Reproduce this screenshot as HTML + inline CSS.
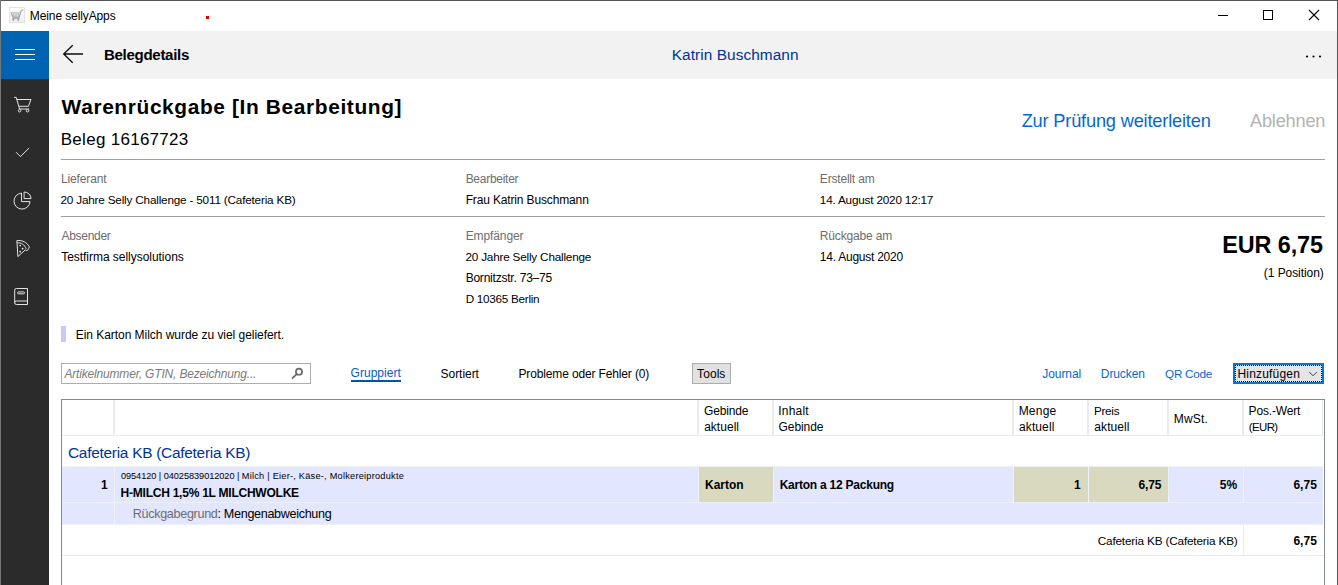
<!DOCTYPE html>
<html><head><meta charset="utf-8">
<style>
html,body{margin:0;padding:0;}
body{width:1338px;height:585px;overflow:hidden;background:#fff;font-family:"Liberation Sans",sans-serif;color:#000;position:relative;}
.t{position:absolute;white-space:nowrap;line-height:1;transform-origin:0 0;}
.b{position:absolute;}
svg{position:absolute;overflow:visible;}
</style></head><body>
<!-- window chrome -->
<div class="b" style="left:1px;top:1px;width:1336px;height:30px;background:#fff"></div>
<div class="b" style="left:1px;top:31px;width:1336px;height:48px;background:#f2f2f2"></div>
<div class="b" style="left:1px;top:31px;width:48px;height:48px;background:#0063b1"></div>
<div class="b" style="left:1px;top:79px;width:48px;height:506px;background:#2b2b2b"></div>
<!-- app icon -->
<div class="b" style="left:9px;top:7px;width:14px;height:14px;border:1px solid #e3e3e3;background:linear-gradient(#ffffff,#efefef)"></div>
<svg style="left:9px;top:7px" width="16" height="16" viewBox="0 0 16 16" fill="none" stroke="#979797" stroke-width="1"><path d="M2 5.2L3.9 10.3H10.3L12.3 3.3L14.3 2.9"/><path d="M2.4 5.3H11.4" stroke="#c4c4c4" stroke-width="0.8"/><path d="M4.1 5.6L4.8 10M6 5.6L6.3 10M7.9 5.6L7.8 10M9.8 5.6L9.3 10" stroke-width="0.9" stroke="#adadad"/><path d="M3.2 11.6H10.6" stroke="#a8a8a8" stroke-width="0.9"/><circle cx="4.3" cy="12.7" r="0.95" fill="#979797" stroke="none"/><circle cx="9.3" cy="12.7" r="0.95" fill="#979797" stroke="none"/></svg>
<div class="b" style="left:206px;top:16px;width:3px;height:3px;background:#d80000"></div>
<!-- window controls -->
<div class="b" style="left:1218px;top:15px;width:10px;height:1px;background:#000"></div>
<div class="b" style="left:1263px;top:10px;width:8px;height:8px;border:1px solid #000"></div>
<svg style="left:1309px;top:10px" width="10" height="10" viewBox="0 0 10 10" stroke="#000" stroke-width="1.1" fill="none"><path d="M0 0L10 10M10 0L0 10"/></svg>
<!-- hamburger -->
<div class="b" style="left:15px;top:49px;width:20px;height:1px;background:#fff"></div>
<div class="b" style="left:15px;top:54px;width:20px;height:1px;background:#fff"></div>
<div class="b" style="left:15px;top:59px;width:20px;height:1px;background:#fff"></div>
<!-- back arrow -->
<svg style="left:60px;top:40px" width="28" height="28" viewBox="0 0 28 28" fill="none" stroke="#0c0c0c" stroke-width="1.35"><path d="M23 14H3.8M12.7 5.2L3.7 14L12.7 22.8"/></svg>
<!-- ellipsis -->
<svg style="left:1300px;top:50px" width="26" height="12" viewBox="1300 50 26 12"><circle cx="1307" cy="56.5" r="1.1" fill="#000"/><circle cx="1313.5" cy="56.5" r="1.1" fill="#000"/><circle cx="1320" cy="56.5" r="1.1" fill="#000"/></svg>
<!-- sidebar icons -->
<svg style="left:0;top:79px" width="50" height="250" viewBox="0 79 50 250" fill="none" stroke="#e4e4e4" stroke-width="1">
<!-- cart -->
<path d="M14 97.4H16.2L19.6 109H29.2"/><path d="M16.8 99.5H31L28.4 106.3H18.8"/><circle cx="19.6" cy="110.7" r="1.3"/><circle cx="27.5" cy="110.7" r="1.3"/>
<!-- check -->
<path d="M16.1 152.2L20.4 156.6L29.1 148"/>
<!-- pie -->
<path d="M21.5 193.1A8 8 0 1 0 30 201.6H21.5Z"/><path d="M24.1 192V198.6H31A6.9 6.6 0 0 0 24.1 192Z"/>
<!-- pizza -->
<path d="M16.9 240.6L17.9 256.6L25.4 249.8C26.2 251.6 28.6 250.6 29.3 246.8C27 242.4 22 239.8 16.9 240.6Z"/><path d="M17.1 242.9C21.3 242.4 24.6 244.6 26.2 248.9"/><circle cx="20.2" cy="245.5" r="0.85" fill="#f0f0f0" stroke="none"/><circle cx="22.6" cy="248.6" r="0.9" fill="#f0f0f0" stroke="none"/><circle cx="20.2" cy="251.6" r="0.85" fill="#f0f0f0" stroke="none"/>
<!-- book -->
<path d="M27.5 288.5H16.4A1.7 1.7 0 0 0 14.7 290.2V302.8A1.7 1.7 0 0 0 16.4 304.5H27.5Z"/><path d="M27.5 301H16.4A1.7 1.7 0 0 0 14.7 302.7"/><rect x="17.6" y="291.9" width="6.9" height="1.9" rx="0.8"/>
</svg>
<!-- separators -->
<div class="b" style="left:61px;top:159px;width:1264px;height:1px;background:#a0a0a0"></div>
<div class="b" style="left:61px;top:216px;width:1264px;height:1px;background:#a0a0a0"></div>
<!-- note bar -->
<div class="b" style="left:61px;top:326px;width:5px;height:16px;background:#c9c9f8"></div>
<!-- search -->
<div class="b" style="left:61px;top:363px;width:248px;height:19px;border:1px solid #abadb3;background:#fff"></div>
<svg style="left:290px;top:367px" width="14" height="14" viewBox="0 0 14 14" fill="none" stroke="#686868" stroke-width="1.7"><circle cx="9" cy="4.7" r="3.05"/><path d="M6.7 7.1L2 11.7"/></svg>
<!-- tabs underline -->
<div class="b" style="left:351px;top:380px;width:50px;height:2px;background:#0055aa"></div>
<!-- Tools button -->
<div class="b" style="left:692px;top:363px;width:37px;height:19px;border:1px solid #adadad;background:#e1e1e1"></div>
<!-- Hinzufuegen button -->
<div class="b" style="left:1233px;top:363px;width:87px;height:17px;border:2px solid #0078d7;background:#e5e5e5"></div>
<div class="b" style="left:1235px;top:365px;width:85px;height:15px;border:1px dotted #000"></div>
<svg style="left:1308px;top:370px" width="11" height="8" viewBox="0 0 11 8" fill="none" stroke="#444" stroke-width="1"><path d="M1.3 2L5 5.8L8.8 2"/></svg>
<!-- table -->
<div class="b" style="left:62px;top:467px;width:1261px;height:35px;background:#e2e7ff"></div>
<div class="b" style="left:62px;top:503px;width:1261px;height:21px;background:#e2e7ff"></div>
<div class="b" style="left:62px;top:524px;width:1261px;height:1px;background:#f0f0f2"></div>
<div class="b" style="left:62px;top:502px;width:1261px;height:1px;background:#eef0f8"></div>
<div class="b" style="left:699px;top:467px;width:74px;height:35px;background:#d9d9c0"></div>
<div class="b" style="left:1014px;top:467px;width:74px;height:35px;background:#d9d9c0"></div>
<div class="b" style="left:1089px;top:467px;width:79px;height:35px;background:#d9d9c0"></div>
<!-- light lines -->
<div class="b" style="left:698px;top:467px;width:1px;height:35px;background:#f0f2fb"></div>
<div class="b" style="left:773px;top:467px;width:1px;height:35px;background:#f0f2fb"></div>
<div class="b" style="left:1013px;top:467px;width:1px;height:35px;background:#f0f2fb"></div>
<div class="b" style="left:1088px;top:467px;width:1px;height:35px;background:#f0f2fb"></div>
<div class="b" style="left:1168px;top:467px;width:1px;height:35px;background:#f0f2fb"></div>
<div class="b" style="left:1243px;top:467px;width:1px;height:35px;background:#f0f2fb"></div>

<div class="b" style="left:62px;top:435px;width:1261px;height:1px;background:#ebebeb"></div>
<div class="b" style="left:62px;top:466px;width:1262px;height:1px;background:#f0f0f0"></div>
<div class="b" style="left:62px;top:555px;width:1262px;height:1px;background:#ebebeb"></div>
<div class="b" style="left:113px;top:400px;width:2px;height:35px;background:#ebebeb"></div>
<div class="b" style="left:697px;top:400px;width:2px;height:35px;background:#ebebeb"></div>
<div class="b" style="left:772px;top:400px;width:2px;height:35px;background:#ebebeb"></div>
<div class="b" style="left:1012px;top:400px;width:2px;height:35px;background:#ebebeb"></div>
<div class="b" style="left:1087px;top:400px;width:2px;height:35px;background:#ebebeb"></div>
<div class="b" style="left:1167px;top:400px;width:2px;height:35px;background:#ebebeb"></div>
<div class="b" style="left:1242px;top:400px;width:2px;height:35px;background:#ebebeb"></div>
<div class="b" style="left:1322px;top:400px;width:1px;height:35px;background:#e8e8e8"></div>
<div class="b" style="left:114px;top:467px;width:1px;height:57px;background:#f0f2fb"></div>
<div class="b" style="left:1243px;top:525px;width:1px;height:30px;background:#ebebeb"></div>
<!-- table outer border -->
<div class="b" style="left:61px;top:399px;width:1264px;height:1px;background:#828790"></div>
<div class="b" style="left:61px;top:399px;width:1px;height:186px;background:#828790"></div>
<div class="b" style="left:1324px;top:399px;width:1px;height:186px;background:#828790"></div>
<span class="t" style="left:29.83px;top:10.00px;font-size:12px;letter-spacing:-0.111px;">Meine sellyApps</span>
<span class="t" style="left:103.95px;top:47.00px;font-size:15.09px;font-weight:700;letter-spacing:-0.313px;">Belegdetails</span>
<span class="t" style="left:671.77px;top:47.00px;font-size:15.4px;color:#003399;letter-spacing:0.062px;">Katrin Buschmann</span>
<span class="t" style="left:61.58px;top:97.00px;font-size:20.9px;font-weight:700;letter-spacing:0.620px;">Warenrückgabe [In Bearbeitung]</span>
<span class="t" style="left:60.76px;top:131.00px;font-size:17px;letter-spacing:0.285px;">Beleg 16167723</span>
<span class="t" style="left:1021.68px;top:112.00px;font-size:18.2px;color:#0468d4;letter-spacing:-0.174px;">Zur Prüfung weiterleiten</span>
<span class="t" style="left:1250.00px;top:112.00px;font-size:18.2px;color:#b3b3b3;letter-spacing:-0.204px;">Ablehnen</span>
<span class="t" style="left:61.07px;top:173.00px;font-size:12px;color:#6d6d6d;letter-spacing:-0.154px;">Lieferant</span>
<span class="t" style="left:60.50px;top:194.00px;font-size:11.76px;letter-spacing:-0.197px;">20 Jahre Selly Challenge - 5011 (Cafeteria KB)</span>
<span class="t" style="left:61.41px;top:230.00px;font-size:12px;color:#6d6d6d;letter-spacing:-0.280px;">Absender</span>
<span class="t" style="left:61.19px;top:251.00px;font-size:12px;letter-spacing:-0.034px;">Testfirma sellysolutions</span>
<span class="t" style="left:465.64px;top:173.00px;font-size:12px;color:#6d6d6d;letter-spacing:-0.270px;">Bearbeiter</span>
<span class="t" style="left:465.64px;top:194.00px;font-size:12px;letter-spacing:-0.144px;">Frau Katrin Buschmann</span>
<span class="t" style="left:465.64px;top:230.00px;font-size:12px;color:#6d6d6d;letter-spacing:-0.088px;">Empfänger</span>
<span class="t" style="left:465.42px;top:251.00px;font-size:11.75px;letter-spacing:-0.202px;">20 Jahre Selly Challenge</span>
<span class="t" style="left:465.64px;top:272.00px;font-size:12px;letter-spacing:-0.218px;">Bornitzstr. 73–75</span>
<span class="t" style="left:465.70px;top:293.00px;font-size:11.71px;letter-spacing:-0.270px;">D 10365 Berlin</span>
<span class="t" style="left:819.83px;top:173.00px;font-size:12px;color:#6d6d6d;letter-spacing:-0.188px;">Erstellt am</span>
<span class="t" style="left:819.83px;top:194.00px;font-size:11.76px;letter-spacing:-0.202px;">14. August 2020 12:17</span>
<span class="t" style="left:819.83px;top:230.00px;font-size:12px;color:#6d6d6d;letter-spacing:-0.169px;">Rückgabe am</span>
<span class="t" style="left:819.87px;top:251.00px;font-size:12px;letter-spacing:-0.249px;">14. August 2020</span>
<span class="t" style="left:1222.33px;top:234.00px;font-size:23.4px;font-weight:700;letter-spacing:-0.112px;">EUR 6,75</span>
<span class="t" style="left:1263.85px;top:267.00px;font-size:12px;letter-spacing:-0.070px;">(1 Position)</span>
<span class="t" style="left:75.70px;top:329.00px;font-size:12px;letter-spacing:-0.040px;">Ein Karton Milch wurde zu viel geliefert.</span>
<span class="t" style="left:64.46px;top:368.00px;font-size:12px;font-style:italic;color:#7a7a7a;letter-spacing:-0.179px;">Artikelnummer, GTIN, Bezeichnung...</span>
<span class="t" style="left:350.56px;top:367.00px;font-size:12px;color:#0a5cbc;letter-spacing:0.035px;">Gruppiert</span>
<span class="t" style="left:440.60px;top:368.00px;font-size:12px;letter-spacing:-0.049px;">Sortiert</span>
<span class="t" style="left:518.44px;top:368.00px;font-size:12px;letter-spacing:-0.139px;">Probleme oder Fehler (0)</span>
<span class="t" style="left:697.10px;top:368.00px;font-size:12px;letter-spacing:0.065px;">Tools</span>
<span class="t" style="left:1042.33px;top:368.00px;font-size:12px;color:#0468d4;letter-spacing:-0.080px;">Journal</span>
<span class="t" style="left:1100.83px;top:368.00px;font-size:12px;color:#0468d4;letter-spacing:-0.097px;">Drucken</span>
<span class="t" style="left:1165.08px;top:368.00px;font-size:11.73px;color:#0468d4;letter-spacing:-0.272px;">QR Code</span>
<span class="t" style="left:1237.44px;top:368.00px;font-size:12px;letter-spacing:0.194px;">Hinzufügen</span>
<span class="t" style="left:704.05px;top:405.00px;font-size:12px;letter-spacing:-0.186px;">Gebinde</span>
<span class="t" style="left:704.13px;top:421.00px;font-size:12px;letter-spacing:0.031px;">aktuell</span>
<span class="t" style="left:778.26px;top:405.00px;font-size:12px;letter-spacing:0.199px;">Inhalt</span>
<span class="t" style="left:778.62px;top:421.00px;font-size:12px;letter-spacing:-0.099px;">Gebinde</span>
<span class="t" style="left:1018.64px;top:405.00px;font-size:12px;letter-spacing:0.235px;">Menge</span>
<span class="t" style="left:1019.03px;top:421.00px;font-size:12px;letter-spacing:0.104px;">aktuell</span>
<span class="t" style="left:1093.92px;top:405.00px;font-size:11.71px;letter-spacing:-0.264px;">Preis</span>
<span class="t" style="left:1094.37px;top:421.00px;font-size:12px;letter-spacing:0.067px;">aktuell</span>
<span class="t" style="left:1173.77px;top:413.00px;font-size:12px;letter-spacing:0.192px;">MwSt.</span>
<span class="t" style="left:1248.55px;top:405.00px;font-size:12px;letter-spacing:-0.170px;">Pos.-Wert</span>
<span class="t" style="left:1248.75px;top:422.00px;font-size:11.49px;letter-spacing:-0.621px;">(EUR)</span>
<span class="t" style="left:67.98px;top:445.00px;font-size:15.4px;color:#003399;letter-spacing:-0.252px;">Cafeteria KB (Cafeteria KB)</span>
<span class="t" style="left:100.89px;top:479.00px;font-size:12px;font-weight:700;">1</span>
<span class="t" style="left:120.90px;top:472.00px;font-size:9.2px;letter-spacing:-0.050px;">0954120 | 04025839012020 |</span>
<span class="t" style="left:241.75px;top:472.00px;font-size:9.2px;letter-spacing:0.244px;">Milch | Eier-, Käse-, Molkereiprodukte</span>
<span class="t" style="left:120.62px;top:487.00px;font-size:12.06px;font-weight:700;letter-spacing:-0.266px;">H-MILCH 1,5% 1L MILCHWOLKE</span>
<span class="t" style="left:132.81px;top:508.00px;font-size:12.6px;letter-spacing:-0.324px;"><span style="color:#6d6d6d">Rückgabegrund</span>: Mengenabweichung</span>
<span class="t" style="left:705.11px;top:479.00px;font-size:12px;font-weight:700;letter-spacing:-0.057px;">Karton</span>
<span class="t" style="left:779.67px;top:479.00px;font-size:12px;font-weight:700;letter-spacing:-0.233px;">Karton a 12 Packung</span>
<span class="t" style="left:1073.93px;top:479.00px;font-size:12px;font-weight:700;">1</span>
<span class="t" style="left:1138.57px;top:479.00px;font-size:12px;font-weight:700;letter-spacing:-0.131px;">6,75</span>
<span class="t" style="left:1219.86px;top:479.00px;font-size:12px;font-weight:700;">5%</span>
<span class="t" style="left:1293.42px;top:479.00px;font-size:12px;font-weight:700;letter-spacing:0.024px;">6,75</span>
<span class="t" style="left:1097.71px;top:535.00px;font-size:11.78px;letter-spacing:-0.172px;">Cafeteria KB (Cafeteria KB)</span>
<span class="t" style="left:1293.42px;top:535.00px;font-size:12px;font-weight:700;letter-spacing:0.024px;">6,75</span>
<!-- window frame -->
<div class="b" style="left:0;top:0;width:1338px;height:1px;background:#565656"></div>
<div class="b" style="left:0;top:0;width:1px;height:585px;background:#767676"></div>
<div class="b" style="left:1337px;top:0;width:1px;height:585px;background:#565656"></div>
</body></html>
